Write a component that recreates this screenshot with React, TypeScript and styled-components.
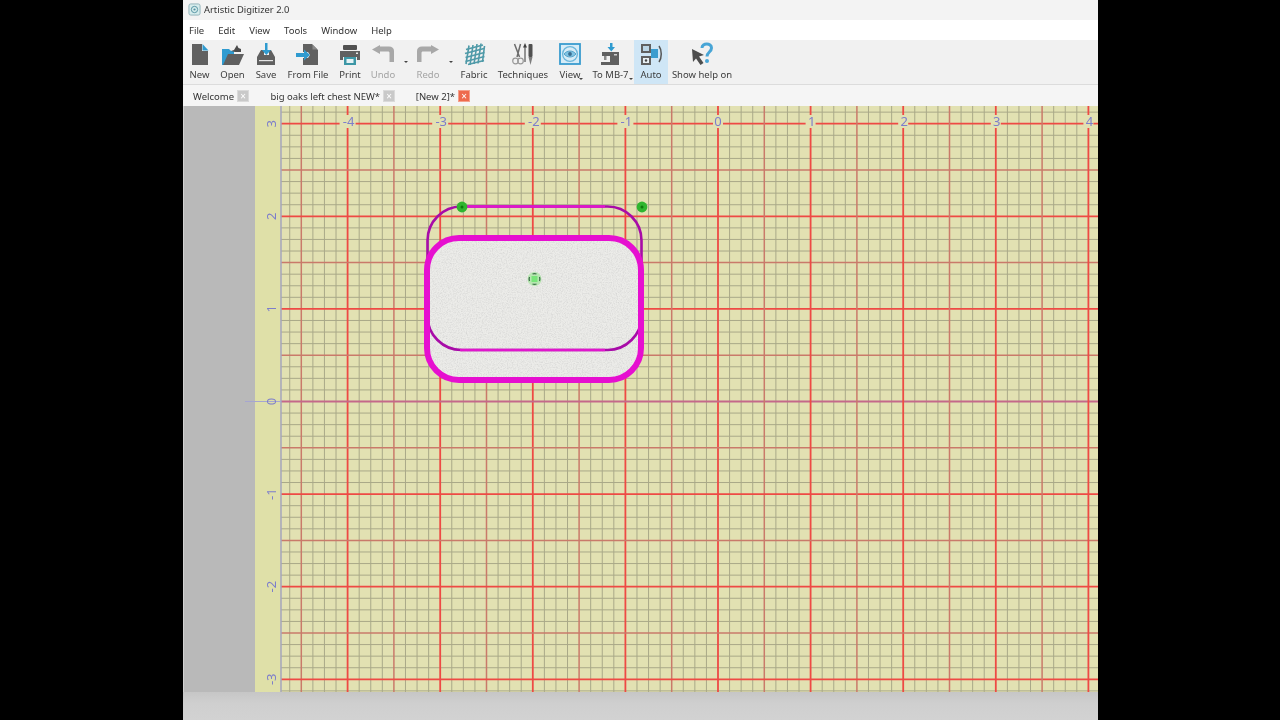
import React from 'react'
import styled, { createGlobalStyle } from 'styled-components'

const GlobalStyle = createGlobalStyle`
  html, body { margin: 0; height: 100%; background: #000; overflow: hidden; }
  #root { height: 100%; }
`

const Page = styled.div`
  width: 1280px;
  height: 720px;
  display: flex;
  justify-content: center;
  background: #000;
  padding-left: 1px;
  box-sizing: border-box;
`

const Window = styled.div`
  width: 915px;
  height: 720px;
  display: flex;
  flex-direction: column;
  font-family: 'Noto Sans', 'Open Sans', sans-serif;
  color: #333;
  background: #f0f0f0;
  filter: blur(0.5px);
`

const TitleBar = styled.div`
  height: 20px;
  display: flex;
  align-items: center;
  gap: 3px;
  padding: 0 0 1px 5px;
  box-sizing: border-box;
  font-size: 9.4px;
  background: #f3f3f3;
`

const MenuBar = styled.div`
  height: 20px;
  display: flex;
  align-items: center;
  gap: 14px;
  padding-left: 6px;
  font-size: 9.5px;
  background: #fff;
`

const Toolbar = styled.div`
  height: 44px;
  display: flex;
  align-items: stretch;
  padding-left: 2px;
  background: #f1f1f1;
  border-bottom: 1px solid #dcdcdc;
`

const Tool = styled.div<{ $w: number; $active?: boolean; $disabled?: boolean }>`
  position: relative;
  width: ${p => p.$w}px;
  flex: none;
  display: flex;
  flex-direction: column;
  align-items: center;
  font-size: 9.5px;
  line-height: 12px;
  white-space: nowrap;
  color: ${p => (p.$disabled ? '#a4a4a4' : '#3c3c3c')};
  background: ${p => (p.$active ? '#cfe6f6' : 'transparent')};
  svg { display: block; height: 24px; width: 24px; margin-top: 2px; margin-bottom: 3px; }
`

const Caret = styled.span<{ $x: number; $y: number }>`
  position: absolute;
  left: ${p => p.$x}px;
  top: ${p => p.$y}px;
  width: 0;
  height: 0;
  border-left: 2px solid transparent;
  border-right: 2px solid transparent;
  border-top: 2px solid #444;
`

const TabBar = styled.div`
  height: 21px;
  display: flex;
  align-items: center;
  padding-top: 1px;
  box-sizing: border-box;
  font-size: 9.5px;
  background: #f5f5f5;
`

const Tab = styled.div<{ $w: number }>`
  width: ${p => p.$w}px;
  flex: none;
  display: flex;
  align-items: center;
  justify-content: flex-end;
  gap: 3px;
  white-space: nowrap;
`

const TabClose = styled.span<{ $active?: boolean }>`
  width: 12px;
  height: 12px;
  display: flex;
  align-items: center;
  justify-content: center;
  background: ${p => (p.$active ? '#ee6a4d' : '#c9c9c9')};
  border: 1px solid ${p => (p.$active ? '#f4a08c' : '#dadada')};
  box-sizing: border-box;
  color: #fff;
  font-size: 10px;
  line-height: 10px;
`

const Workspace = styled.div`
  height: 586px;
  display: flex;
`

const SideGutter = styled.div`
  position: relative;
  width: 72px;
  flex: none;
  box-sizing: border-box;
  background: #b9b9b9;
  border-left: 1px solid #d2d2d2;
`

const ZeroTick = styled.span`
  position: absolute;
  right: 0;
  top: 295px;
  width: 10px;
  height: 1px;
  background: #a6a6d0;
`

const Canvas = styled.svg`
  display: block;
  width: 843px;
  height: 586px;
  flex: none;
`

const StatusBar = styled.div`
  flex: 1;
  background: linear-gradient(#c6c6c6, #cfcfcf 40%, #d2d2d2);
`

// canvas origin is x=255,y=106 on the page
const X0 = 718 - 255
const Y0 = 401.5 - 106
const INCH = 92.6
const GRID_L = 26
const PAPER = '#e2e1b2'

function GridLines() {
  const w = 843
  const h = 586
  const lines: React.ReactNode[] = []
  for (let i = -40; i <= 40; i++) {
    const step = (i * INCH) / 8
    const x = X0 + step
    const y = Y0 + step
    const kind = i % 8 === 0 ? 'major' : i % 4 === 0 ? 'half' : 'fine'
    const stroke = kind === 'major' ? '#ee4a44' : kind === 'half' ? '#c97a6a' : '#a9a888'
    const sw = kind === 'major' ? 1.8 : kind === 'half' ? 1.5 : 1
    if (kind === 'fine') {
      if (x > GRID_L && x < w) lines.unshift(<line key={`v${i}`} x1={x} x2={x} y1={0} y2={h} stroke={stroke} strokeWidth={sw} />)
      if (y > 0 && y < h) lines.unshift(<line key={`h${i}`} x1={GRID_L} x2={w} y1={y} y2={y} stroke={stroke} strokeWidth={sw} />)
    } else {
      if (x > GRID_L && x < w) lines.push(<line key={`v${i}`} x1={x} x2={x} y1={0} y2={h} stroke={stroke} strokeWidth={sw} />)
      if (y > 0 && y < h) lines.push(<line key={`h${i}`} x1={GRID_L} x2={w} y1={y} y2={y} stroke={i === 0 ? '#c4688a' : stroke} strokeWidth={sw} />)
    }
  }
  return <>{lines}</>
}

function Rulers() {
  const xs = [-4, -3, -2, -1, 0, 1, 2, 3, 4]
  const ys = [3, 2, 1, 0, -1, -2, -3]
  return (
    <g fontFamily="'Noto Sans', sans-serif" fontSize="13" fill="#7d7ecb">
      {xs.map(n => (
        <g key={n}>
          <rect x={X0 + n * INCH - (n < 0 ? 8 : 5)} y={9} width={n < 0 ? 16 : 10} height={13} fill={PAPER} />
          <text x={X0 + n * INCH + (n === 0 ? 0 : 1)} y={19.500} textAnchor="middle">
            {n < 0 ? `-${-n}` : n}
          </text>
        </g>
      ))}
      {ys.map(n => (
        <text key={n} textAnchor="middle" transform={`translate(21 ${Y0 - n * INCH}) rotate(-90)`}>
          {n < 0 ? `-${-n}` : n}
        </text>
      ))}
    </g>
  )
}

function Design() {
  return (
    <g fill="none">
      <filter id="stitches" x="0" y="0" width="100%" height="100%">
        <feTurbulence type="fractalNoise" baseFrequency="0.8" numOctaves="2" seed="4" />
        <feColorMatrix values="0 0 0 0 0.55  0 0 0 0 0.55  0 0 0 0 0.55  0 0 0 1.1 -0.42" />
        <feComposite in2="SourceGraphic" operator="in" />
        <feMerge>
          <feMergeNode in="SourceGraphic" />
          <feMergeNode />
        </feMerge>
      </filter>
      <rect x={172} y={132} width={214} height={142} rx={32} fill="#ecece9" filter="url(#stitches)" />
      <rect x={172.500} y={100.500} width={214} height={143.500} rx={34} stroke="#a80ca8" strokeWidth={2.600} />
      <line x1={210} x2={350} y1={100.500} y2={100.500} stroke="#e016cc" strokeWidth={2.600} />
      <line x1={205} x2={350} y1={244} y2={244} stroke="#e016cc" strokeWidth={2.400} />
      <rect x={172} y={132} width={214} height={142} rx={32} stroke="#e60fd0" strokeWidth={6} />
      <circle cx={207} cy={101} r={5.400} fill="#2fb52f" />
      <circle cx={207} cy={101} r={1.500} fill="#0d7a0d" />
      <circle cx={387} cy={101} r={5.400} fill="#2fb52f" />
      <circle cx={387} cy={101} r={1.500} fill="#0d7a0d" />
      <circle cx={279.500} cy={173} r={7} fill="#b8e6b2" />
      <rect x={276.500} y={170} width={6} height={6} fill="#79e57a" />
      <path d="M277.500 168a5.500 5.500 0 0 1 4 0M277.500 178a5.500 5.500 0 0 0 4 0M274.500 171a5.500 5.500 0 0 0 0 4M284.500 171a5.500 5.500 0 0 1 0 4" stroke="#3c6e48" strokeWidth={1.300} />
    </g>
  )
}

const BLUE = '#2f9bd0'
const GREY = '#606060'

const NewIcon = () => (
  <svg viewBox="0 0 24 24">
    <path d="M4 2h10v7h6v14H4z" fill={GREY} />
    <path d="M14.500 2l6 6.500h-6z" fill={BLUE} />
  </svg>
)
const OpenIcon = () => (
  <svg viewBox="0 0 24 24">
    <path d="M1 7h7l2 2h3v6L6 23H1z" fill={BLUE} />
    <path d="M10 9l3-1 3-5 1.500 3 2.500 1v3h-6z" fill="#4c4c4c" />
    <path d="M7 12h16l-5 11H2z" fill={GREY} />
  </svg>
)
const SaveIcon = () => (
  <svg viewBox="0 0 24 24">
    <path d="M7 8h3v5h5V8h2l4 7v8H3v-8z" fill={GREY} />
    <rect x="5" y="18" width="14" height="1.200" fill="#e4e4e4" />
    <path d="M11 1h2.500v7H17l-4.700 5L8 8h3z" fill={BLUE} />
  </svg>
)
const FromFileIcon = () => (
  <svg viewBox="0 0 24 24">
    <path d="M7 2h9l6 6v15H7v-7h5l2-3-2-3H7z" fill={GREY} />
    <path d="M16.500 2.500l5 5h-5z" fill="#8a8a8a" />
    <path d="M0 11h8V7.500l6 5.500-6 5.500V15H0z" fill={BLUE} />
  </svg>
)
const PrintIcon = () => (
  <svg viewBox="0 0 24 24">
    <rect x="5" y="3" width="14" height="5" rx="1" fill="#505050" />
    <path d="M2 9h20v9h-3v-3H5v3H2z" fill={GREY} />
    <rect x="18" y="10.500" width="2" height="1.500" fill="#e8e8e8" />
    <rect x="6" y="15" width="12" height="8" fill="#3d97a6" />
    <rect x="8.500" y="17" width="7" height="4" fill="#e6f2f4" />
  </svg>
)
const UndoIcon = () => (
  <svg viewBox="0 0 24 24">
    <path d="M9 3L1 7.500 9 12V9.500h8c1 0 1.500.5 1.500 1.500v9H23V9c0-3-2-4.500-5-4.500H9z" fill="#a8a8a8" />
  </svg>
)
const RedoIcon = () => (
  <svg viewBox="0 0 24 24">
    <path d="M15 3l8 4.500L15 12V9.500H7C6 9.500 5.500 10 5.500 11v9H1V9c0-3 2-4.500 5-4.500h9z" fill="#a8a8a8" />
  </svg>
)
const FabricIcon = () => (
  <svg viewBox="0 0 24 24" stroke="#4f9aa8" strokeWidth="1.600" fill="none">
    <path d="M4 7.500L21 3M3 11.500l19-5M3.500 15.500l19-5M3.500 19.500l19-5M6 22.500l16-4" />
    <path d="M7 3.500L4 22M11 3l-3 20M15 2l-3 20M19 1.500l-3 20M22.500 4l-2 16" />
  </svg>
)
const TechniquesIcon = () => (
  <svg viewBox="0 0 24 24" fill="none">
    <path d="M3.500 2l5 13M9.500 2L6 15" stroke="#6c6c6c" strokeWidth="1.500" />
    <circle cx="4.500" cy="19" r="2.800" stroke="#999" strokeWidth="1.200" />
    <circle cx="9.500" cy="19" r="2.800" stroke="#999" strokeWidth="1.200" />
    <path d="M14 4v16" stroke="#555" strokeWidth="1.200" />
    <path d="M14 1l-2 4.500h4z" fill="#3f3f3f" />
    <rect x="17.500" y="2" width="4" height="13" rx="1" fill="#505050" />
    <path d="M17.500 15h4l-2 8z" fill="#7d7d7d" />
  </svg>
)
const ViewIcon = () => (
  <svg viewBox="0 0 24 24" fill="none">
    <rect x="2" y="2" width="20" height="20" fill="#d7ecf7" stroke="#3a9ccf" strokeWidth="1.800" />
    <circle cx="12" cy="12" r="7.400" stroke="#6bb6da" strokeWidth="1.300" />
    <path d="M6 12c3-4 9-4 12 0-3 4-9 4-12 0z" fill="#7fc3e3" stroke="#4596bf" strokeWidth=".8" />
    <circle cx="12" cy="12" r="1.900" fill="#3b6c8e" />
  </svg>
)
const MachineIcon = () => (
  <svg viewBox="0 0 24 24">
    <path d="M11 1h2.500v4H16l-3.700 4.500L8.500 5H11z" fill={BLUE} />
    <path d="M3 10h17v13H2v-3h9v-6H3z" fill={GREY} />
    <rect x="5" y="14" width="2.500" height="4" fill="#8a8a8a" />
    <rect x="15" y="12" width="3" height="1.500" fill="#cfcfcf" />
  </svg>
)
const AutoIcon = () => (
  <svg viewBox="0 0 24 24" fill="none">
    <rect x="2" y="2" width="10" height="9" fill={GREY} />
    <rect x="4" y="4" width="6" height="5" fill="#bcd6e6" />
    <rect x="2" y="14" width="10" height="9" fill={GREY} />
    <rect x="4" y="16" width="6" height="5" fill="#e8f0f4" />
    <circle cx="7" cy="18.500" r="1.200" fill="#444" />
    <rect x="12" y="7" width="7" height="9" fill="#3a9ccf" />
    <path d="M20 4c3 4 3 12 0 16" stroke="#555" strokeWidth="1.500" />
  </svg>
)
const HelpIcon = () => (
  <svg viewBox="0 0 24 24" fill="none">
    <path d="M2 7l12 6-5 1.500 4.500 6.500-3 2L6 16.500 3 20z" fill="#4d4d4d" />
    <path d="M12 6c0-5.500 9.500-5.500 9.500 0 0 4-4.500 4-4.500 8.500" stroke="#48a5d6" strokeWidth="3" />
    <circle cx="17" cy="19" r="2" fill="#48a5d6" />
  </svg>
)

const tools = [
  { label: 'New', w: 29, icon: <NewIcon /> },
  { label: 'Open', w: 37, icon: <OpenIcon /> },
  { label: 'Save', w: 30, icon: <SaveIcon /> },
  { label: 'From File', w: 54, icon: <FromFileIcon /> },
  { label: 'Print', w: 30, icon: <PrintIcon /> },
  { label: 'Undo', w: 36, icon: <UndoIcon />, disabled: true, caret: [39, 21] },
  { label: 'Redo', w: 54, icon: <RedoIcon />, disabled: true, caret: [48, 21] },
  { label: 'Fabric', w: 38, icon: <FabricIcon /> },
  { label: 'Techniques', w: 60, icon: <TechniquesIcon /> },
  { label: 'View', w: 34, icon: <ViewIcon />, caret: [26, 38] },
  { label: 'To MB-7', w: 47, icon: <MachineIcon />, caret: [42, 38] },
  { label: 'Auto', w: 34, icon: <AutoIcon />, active: true },
  { label: 'Show help on', w: 68, icon: <HelpIcon /> },
]

export default function App() {
  return (
    <Page>
      <GlobalStyle />
      <Window>
        <TitleBar>
          <svg width="13" height="13" viewBox="0 0 14 14" fill="none">
            <rect x="1" y="1" width="12" height="12" rx="2" fill="#d6ecec" stroke="#8fb0b8" />
            <circle cx="7" cy="7" r="3.400" stroke="#4f8f9f" />
            <circle cx="7" cy="7" r="1.200" fill="#4f8f9f" />
          </svg>
          Artistic Digitizer 2.0
        </TitleBar>
        <MenuBar>
          {['File', 'Edit', 'View', 'Tools', 'Window', 'Help'].map(m => (
            <span key={m}>{m}</span>
          ))}
        </MenuBar>
        <Toolbar>
          {tools.map(t => (
            <Tool key={t.label} $w={t.w} $active={t.active} $disabled={t.disabled}>
              {t.icon}
              {t.label}
              {t.caret && <Caret $x={t.caret[0]} $y={t.caret[1]} />}
            </Tool>
          ))}
        </Toolbar>
        <TabBar>
          <Tab $w={66}>Welcome<TabClose>×</TabClose></Tab>
          <Tab $w={146}>big oaks left chest NEW*<TabClose>×</TabClose></Tab>
          <Tab $w={75}>[New 2]*<TabClose $active>×</TabClose></Tab>
        </TabBar>
        <Workspace>
          <SideGutter>
            <ZeroTick />
          </SideGutter>
          <Canvas viewBox="0 0 843 586">
            <rect width="843" height="586" fill={PAPER} />
            <GridLines />
            <rect width={GRID_L} height="586" fill="#dfe0a8" />
            <line x1={GRID_L} x2={GRID_L} y1={0} y2={586} stroke="#a5a5bc" strokeWidth="1.500" />
            <line x1={0} x2={GRID_L} y1={Y0} y2={Y0} stroke="#a6a6d0" strokeWidth="1" />
            <Rulers />
            <Design />
          </Canvas>
        </Workspace>
        <StatusBar />
      </Window>
    </Page>
  )
}
